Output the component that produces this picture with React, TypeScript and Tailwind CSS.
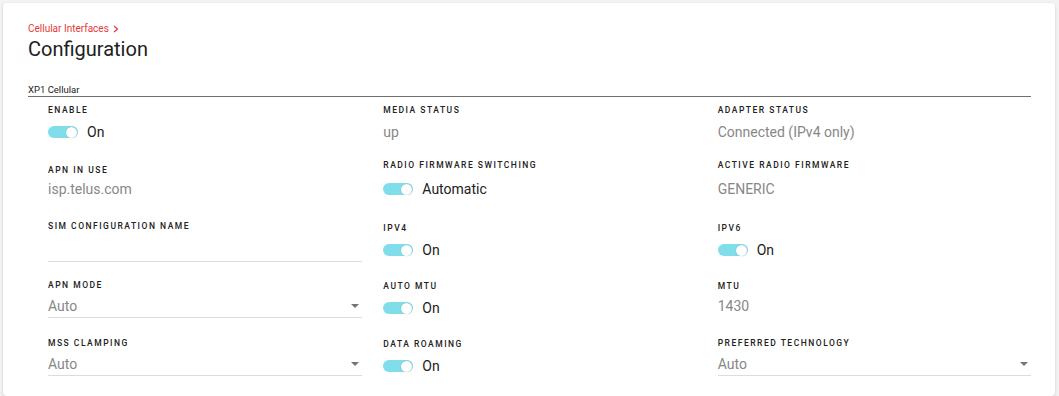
import React from 'react';

// Label above each field
const Label: React.FC<{ text: string; className?: string }> = ({ text, className = '' }) => (
  <div className={`text-[8.5px] leading-[12px] font-medium tracking-[1.5px] uppercase text-[#212121] ${className}`}>
    {text}
  </div>
);

// Toggle switch with its caption
const Toggle: React.FC<{ text: string; className?: string }> = ({ text, className = '' }) => (
  <div className={`flex items-center h-[20px] ${className}`}>
    <div className="relative w-[30px] h-[12px] rounded-full bg-[#80deea]">
      <div className="absolute right-[1px] top-[0.5px] w-[11px] h-[11px] rounded-full bg-white shadow-[0_0_1px_rgba(0,0,0,0.35)]" />
    </div>
    <span className="ml-[9px] text-[14px] leading-[20px] text-[#212121]">{text}</span>
  </div>
);

// Read-only value
const Value: React.FC<{ text: string; className?: string }> = ({ text, className = '' }) => (
  <div className={`text-[14px] leading-[20px] text-[#878787] ${className}`}>{text}</div>
);

// Select with dropdown caret
const Select: React.FC<{ text: string; className?: string }> = ({ text, className = '' }) => (
  <div className={`flex items-center justify-between border-b border-[#dcdcdc] pt-[2px] pb-[1px] ${className}`}>
    <span className="text-[14px] leading-[20px] text-[#878787]">{text}</span>
    <svg width="8" height="4" viewBox="0 0 8 4" className="mr-[3px]">
      <path d="M0 0 L8 0 L4 4 Z" fill="#757575" />
    </svg>
  </div>
);

const App: React.FC = () => {
  return (
    <div className="min-h-screen bg-[#f3f3f3] p-[3px] pr-[4px] font-['Roboto',sans-serif]">
      <div className="bg-white rounded-[4px] shadow-[0_1px_3px_rgba(0,0,0,0.18)] pl-[25px] pr-[24px] pt-[19px] pb-[20px]">
        {/* Breadcrumb */}
        <div className="flex items-center text-[10px] leading-[14px] text-[#e53935]">
          Cellular Interfaces
          <svg width="6" height="8" viewBox="0 0 6 8" className="ml-[4px]">
            <path d="M1 1 L4.5 4 L1 7" stroke="#e53935" strokeWidth="1.2" fill="none" />
          </svg>
        </div>

        {/* Title */}
        <h1 className="text-[20px] leading-[28px] text-[#212121] -mt-[1px]">Configuration</h1>

        {/* Section header */}
        <div className="mt-[21px] text-[9.5px] leading-[12px] text-[#212121] border-b border-[#707070]">
          XP1 Cellular
        </div>

        {/* Fields grid */}
        <div className="grid grid-cols-3">
          {/* Column 1 */}
          <div className="flex flex-col pl-[20px]">
            <Label text="Enable" className="mt-[7px]" />
            <Toggle text="On" className="mt-[6px]" />
            <Label text="APN in use" className="mt-[22px]" />
            <Value text="isp.telus.com" className="mt-[3px]" />
            <Label text="SIM configuration name" className="mt-[21px]" />
            <div className="h-[30px] border-b border-[#dcdcdc]" />
            <Label text="APN mode" className="mt-[17px]" />
            <Select text="Auto" className="mt-[3px]" />
            <Label text="MSS clamping" className="mt-[19px]" />
            <Select text="Auto" className="mt-[3px]" />
          </div>

          {/* Column 2 */}
          <div className="flex flex-col pl-[21px]">
            <Label text="Media status" className="mt-[7px]" />
            <Value text="up" className="mt-[6px]" />
            <Label text="Radio firmware switching" className="mt-[17px]" />
            <Toggle text="Automatic" className="mt-[8px]" />
            <Label text="IPv4" className="mt-[23px]" />
            <Toggle text="On" className="mt-[6px]" />
            <Label text="Auto MTU" className="mt-[20px]" />
            <Toggle text="On" className="mt-[6px]" />
            <Label text="Data roaming" className="mt-[20px]" />
            <Toggle text="On" className="mt-[6px]" />
          </div>

          {/* Column 3 */}
          <div className="flex flex-col pl-[21px]">
            <Label text="Adapter status" className="mt-[7px]" />
            <Value text="Connected (IPv4 only)" className="mt-[6px]" />
            <Label text="Active radio firmware" className="mt-[17px]" />
            <Value text="GENERIC" className="mt-[8px]" />
            <Label text="IPv6" className="mt-[23px]" />
            <Toggle text="On" className="mt-[6px]" />
            <Label text="MTU" className="mt-[20px]" />
            <Value text="1430" className="mt-[4px]" />
            <Label text="Preferred technology" className="mt-[21px]" />
            <Select text="Auto" className="mt-[3px]" />
          </div>
        </div>
      </div>
    </div>
  );
};

export default App;
